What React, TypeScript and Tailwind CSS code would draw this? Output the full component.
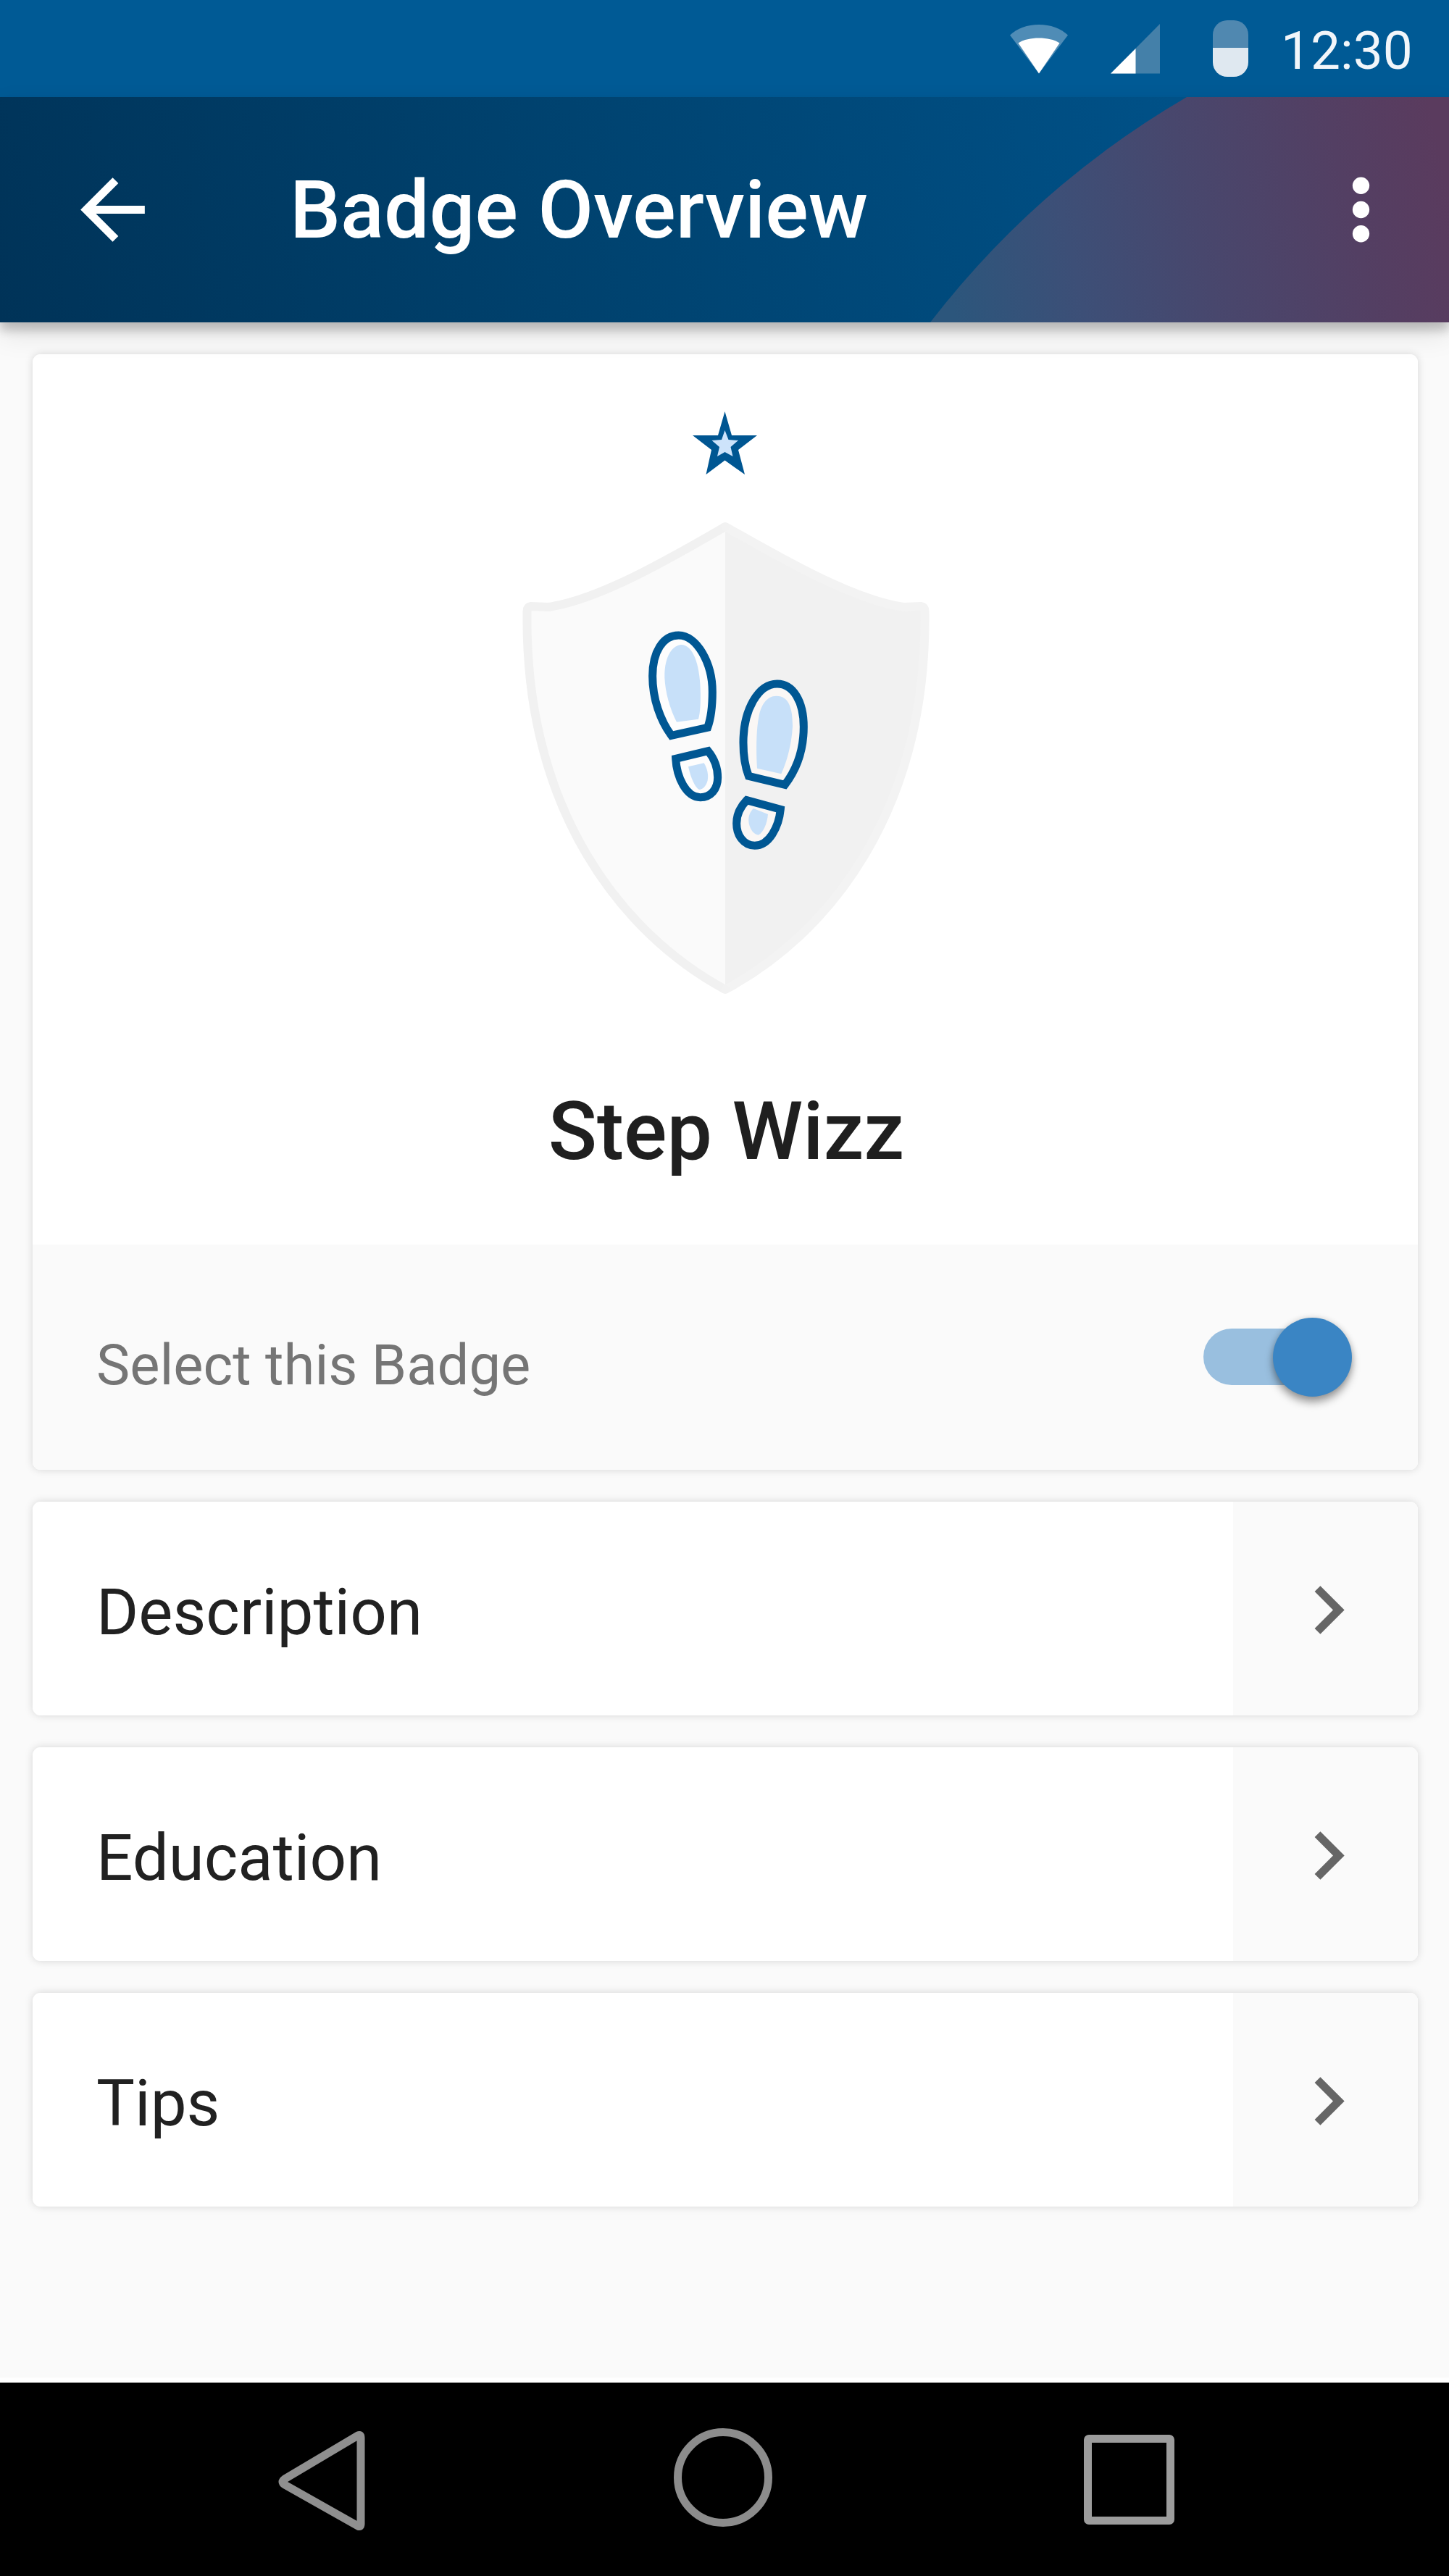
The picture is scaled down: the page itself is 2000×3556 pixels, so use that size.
import React, { useState } from "react";

function WifiIcon() {
  return (
    <svg className="h-[70px] w-[80px]" viewBox="0 0 80 70">
      <path d="M0 15.500C10 6 24 1 40 1s30 5 40 14.500L40 68.500z" fill="#4f8cb6" />
      <path d="M11.500 26.500C19 21.500 29 19.500 40 19.500s21 2 28.500 7L40 68.500z" fill="#fff" />
    </svg>
  );
}

function SignalIcon() {
  return (
    <svg className="h-[70px] w-[68px]" viewBox="0 0 68 70">
      <path d="M68 0V68.500H0z" fill="#4480a9" />
      <path d="M34.500 34V68.500H0z" fill="#fff" />
    </svg>
  );
}

function BatteryIcon() {
  return (
    <div className="flex h-[78px] w-[49px] flex-col overflow-hidden rounded-[20px]">
      <div className="h-[38px] bg-[#5088b0]" />
      <div className="flex-1 bg-[#dfe8f0]" />
    </div>
  );
}

function StatusBar() {
  return (
    <div className="flex h-[134px] items-start bg-[#005a95] pl-[1394px] text-white">
      <div className="mt-[33px]">
        <WifiIcon />
      </div>
      <div className="mt-[33px] ml-[59px]">
        <SignalIcon />
      </div>
      <div className="mt-[28px] ml-[73px]">
        <BatteryIcon />
      </div>
      <span className="mt-[26px] ml-[45px] text-[73px] leading-[88px] whitespace-nowrap text-[#f2f6fa]">12:30</span>
    </div>
  );
}

function AppBar() {
  return (
    <header className="relative z-10 flex h-[311px] items-center bg-[linear-gradient(72deg,#003358_0%,#004370_42%,#005086_80%,#005a92_100%)] shadow-[0_11px_13px_rgba(0,0,0,0.2),0_16px_36px_rgba(0,0,0,0.1)]">
      <svg className="absolute top-0 right-0 h-[311px] w-[716px]" viewBox="0 0 716 311">
        <defs>
          <linearGradient id="corner" x1="0" y1="0.5" x2="1" y2="0.4">
            <stop offset="0" stopColor="#2c567c" />
            <stop offset="0.25" stopColor="#3d4f77" />
            <stop offset="0.5" stopColor="#48476d" />
            <stop offset="0.8" stopColor="#533f63" />
            <stop offset="1" stopColor="#5a3b5e" />
          </linearGradient>
        </defs>
        <path d="M0 311A1230 1230 0 0 1 354 0H716V311z" fill="url(#corner)" />
      </svg>
      <button className="ml-[89px]" aria-label="Back">
        <svg className="size-[133px]" viewBox="0 0 24 24" fill="#fff">
          <path d="M20 11H7.830l5.590-5.590L12 4l-8 8 8 8 1.410-1.410L7.830 13H20v-2z" />
        </svg>
      </button>
      <h1 className="ml-[178px] text-[111px] leading-[130px] font-medium whitespace-nowrap text-white">Badge Overview</h1>
      <button className="relative mr-[55px] ml-auto" aria-label="More options">
        <svg className="size-[133px]" viewBox="0 0 24 24" fill="#fff">
          <circle cx="12" cy="6" r="2.100" />
          <circle cx="12" cy="12" r="2.100" />
          <circle cx="12" cy="18" r="2.100" />
        </svg>
      </button>
    </header>
  );
}

function Star() {
  return (
    <svg className="h-[92px] w-[96px]" viewBox="953 566 96 92">
      <path
        d="M1000.500 568L1010 601H1045L1019 621L1028 655L1000.500 635.500L974.500 655L982 621L956 601H991z"
        fill="#005692"
      />
      <path d="M1000.500 594L1005.500 607L1019 608L1008.500 617L1011.500 630L1000.500 624L990 630L993 617L982.500 608L996 607z" fill="#cde3fb" />
    </svg>
  );
}

function Shield() {
  return (
    <svg className="h-[660px] w-[570px]" viewBox="717 716 570 660">
      <path d="M1002 727C930 768 830 827 757 838L733 837Q727.500 838 727.500 844C724 1120 860 1290 1002 1366z" fill="#fafafa" />
      <path d="M1001 727C1074 768 1174 827 1247 838L1271 837Q1276.500 838 1276.500 844C1280 1120 1144 1290 1001 1366z" fill="#f1f1f1" />
      <path d="M1001 1366C860 1290 724 1120 727.500 844Q727.500 838 733 837L757 838C830 827 930 768 1001 727" fill="none" stroke="#f1f1f1" strokeWidth="12" />
      <path d="M1001 727C1074 768 1174 827 1247 838L1271 837Q1276.500 838 1276.500 844C1280 1120 1144 1290 1001 1366" fill="none" stroke="#f3f3f3" strokeWidth="12" />
      <circle cx="1001" cy="727" r="6" fill="#f2f2f2" />
      <circle cx="1001" cy="1366" r="6" fill="#f2f2f2" />
      <g transform="translate(860 840) scale(0.3333)">
        <g stroke="#005793" strokeWidth="33" fill="#fdfdfd">
          <path d="M230 111C165 111 122 180 122 280C122 375 155 465 200 526L350 493C362 460 370 410 370 345C370 225 305 111 230 111z" />
          <path d="M218 622L352 590C378 622 392 660 392 700C392 750 362 782 320 782C262 782 222 700 218 622z" />
          <path d="M638 312C560 312 498 420 498 555C498 610 505 655 520 694L670 730C720 665 748 580 748 490C748 385 705 312 638 312z" fill="#faf7f5" />
          <path d="M512 794L652 832C645 905 605 982 545 982C500 982 470 940 470 890C470 855 485 822 512 794z" fill="#faf7f5" />
        </g>
        <g fill="#c7e0f9">
          <path d="M240 150C195 155 170 215 172 285C174 345 195 420 222 470L312 458C320 430 322 380 320 330C316 230 290 150 240 150z" />
          <path d="M270 655L335 640C350 665 354 690 350 712C345 735 330 750 315 750C298 742 280 700 270 655z" />
          <path d="M635 362C690 362 703 420 702 490C698 560 680 630 655 685L555 662C550 580 552 500 562 450C570 400 595 362 635 362z" />
          <path d="M540 828L600 852C597 890 580 930 560 938C535 935 518 900 520 870C522 850 530 838 540 828z" />
        </g>
      </g>
    </svg>
  );
}

function Switch({ on, onToggle }: { on: boolean; onToggle: () => void }) {
  return (
    <button
      role="switch"
      aria-checked={on}
      aria-label="Select this Badge"
      onClick={onToggle}
      className={
        on
          ? "flex h-[78px] w-[205px] items-center justify-end rounded-full bg-[linear-gradient(90deg,#99bfdf_180px,transparent_180px)]"
          : "flex h-[78px] w-[205px] items-center justify-start rounded-full bg-gray-400"
      }
    >
      <span className="size-[109px] shrink-0 rounded-full bg-[#3a85c4] shadow-[0_8px_12px_rgba(0,0,0,0.36),0_0_8px_rgba(0,0,0,0.14)]" />
    </button>
  );
}

function BadgeCard() {
  const [selected, setSelected] = useState(true);
  return (
    <section className="flex h-[1540px] flex-col overflow-hidden rounded-[11px] bg-white">
      <div className="flex h-[1229px] shrink-0 flex-col items-center">
        <div className="mt-[77px] flex">
          <Star />
        </div>
        <div className="mt-[58px] ml-[2px] flex">
          <Shield />
        </div>
        <h2 className="mt-[121px] ml-[3px] text-[111px] leading-[130px] font-medium whitespace-nowrap text-[#1f1f1f]">Step Wizz</h2>
      </div>
      <div className="flex flex-1 items-start justify-between bg-[#fafafa] pr-[91px] pl-[88px]">
        <span className="mt-[121px] text-[77.8px] leading-[92px] whitespace-nowrap text-[#757575]">Select this Badge</span>
        <div className="mt-[116px] flex">
          <Switch on={selected} onToggle={() => setSelected(!selected)} />
        </div>
      </div>
    </section>
  );
}

function LinkCard({ label }: { label: string }) {
  return (
    <div className="rounded-[11px] shadow-[0_0_12px_rgba(0,0,0,0.15)]">
      <section className="flex h-[295px] overflow-hidden rounded-[11px] bg-white">
        <div className="flex flex-1 items-center pt-[11px] pl-[88px]">
          <span className="text-[88.9px] leading-[104px] whitespace-nowrap text-[#212121]">{label}</span>
        </div>
        <div className="flex w-[255px] items-center bg-[#fafafa] pt-[4px] pl-[65px]">
          <svg className="size-[133px]" viewBox="0 0 24 24" fill="#666">
            <path d="M10 6L8.590 7.410 13.170 12l-4.580 4.590L10 18l6-6z" />
          </svg>
        </div>
      </section>
    </div>
  );
}

function NavBar() {
  return (
    <nav className="flex h-[267px] items-start bg-black pl-[384px]">
      <svg className="mt-[64px] h-[144px] w-[120px]" viewBox="0 0 120 144" fill="none">
        <path d="M114 12V131Q114 136 110 134L9 77Q3 73 9 69L110 9Q114 7 114 12z" stroke="#8f8f8f" strokeWidth="11" strokeLinejoin="round" />
      </svg>
      <div className="mt-[63px] ml-[426px] size-[136px] rounded-full border-[11px] border-[#8c8c8c]" />
      <div className="mt-[72px] ml-[430px] h-[124px] w-[125px] rounded-[7px] border-[11px] border-[#9c9c9c]" />
    </nav>
  );
}

export default function App() {
  return (
    <div className="flex h-[3556px] w-[2000px] flex-col overflow-hidden bg-[#fafafa] font-['Roboto',sans-serif]">
      <StatusBar />
      <AppBar />
      <main className="flex flex-1 flex-col gap-[44px] border-b-[7px] border-white pt-[44px] pr-[43px] pl-[45px]">
        <div className="rounded-[11px] shadow-[0_0_12px_rgba(0,0,0,0.15)]">
          <BadgeCard />
        </div>
        <LinkCard label="Description" />
        <LinkCard label="Education" />
        <LinkCard label="Tips" />
      </main>
      <NavBar />
    </div>
  );
}
